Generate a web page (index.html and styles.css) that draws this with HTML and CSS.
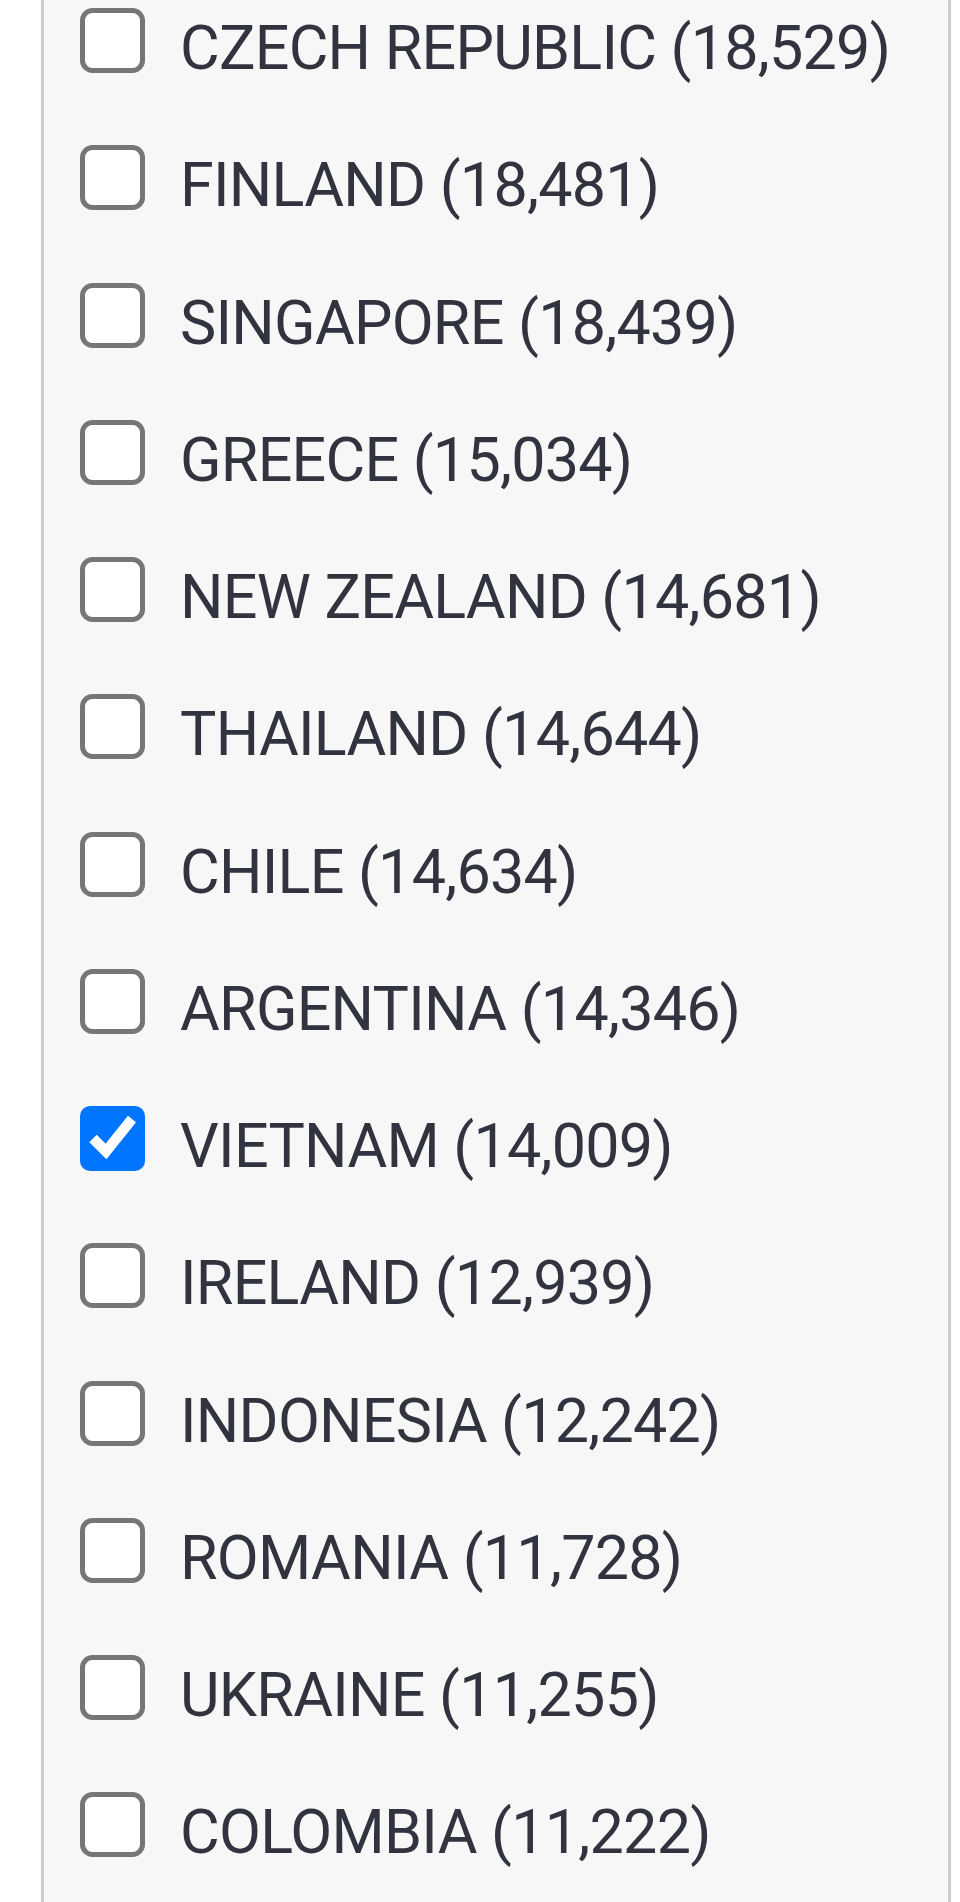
FILE: index.html
```html
<!DOCTYPE html>
<html lang="en">
<head>
    <meta charset="UTF-8">
    <meta name="viewport" content="width=device-width, initial-scale=1.0">
    <title>Country filter</title>
    <link rel="stylesheet" href="styles.css">
</head>
<body>

    <div class="filter-list">
        <label class="filter-item"><input type="checkbox" name="country" value="CZ"><span>CZECH REPUBLIC (18,529)</span></label>
        <label class="filter-item"><input type="checkbox" name="country" value="FI"><span>FINLAND (18,481)</span></label>
        <label class="filter-item"><input type="checkbox" name="country" value="SG"><span>SINGAPORE (18,439)</span></label>
        <label class="filter-item"><input type="checkbox" name="country" value="GR"><span>GREECE (15,034)</span></label>
        <label class="filter-item"><input type="checkbox" name="country" value="NZ"><span>NEW ZEALAND (14,681)</span></label>
        <label class="filter-item"><input type="checkbox" name="country" value="TH"><span>THAILAND (14,644)</span></label>
        <label class="filter-item"><input type="checkbox" name="country" value="CL"><span>CHILE (14,634)</span></label>
        <label class="filter-item"><input type="checkbox" name="country" value="AR"><span>ARGENTINA (14,346)</span></label>
        <label class="filter-item"><input type="checkbox" name="country" value="VN" checked><span>VIETNAM (14,009)</span></label>
        <label class="filter-item"><input type="checkbox" name="country" value="IE"><span>IRELAND (12,939)</span></label>
        <label class="filter-item"><input type="checkbox" name="country" value="ID"><span>INDONESIA (12,242)</span></label>
        <label class="filter-item"><input type="checkbox" name="country" value="RO"><span>ROMANIA (11,728)</span></label>
        <label class="filter-item"><input type="checkbox" name="country" value="UA"><span>UKRAINE (11,255)</span></label>
        <label class="filter-item"><input type="checkbox" name="country" value="CO"><span>COLOMBIA (11,222)</span></label>
    </div>

</body>
</html>
```
FILE: styles.css
```css
body {
    margin: 0;
    background-color: #ffffff;
    font-family: Roboto, "Liberation Sans", sans-serif;
    color: #31333f;
}
.filter-list {
    margin-left: 41px;
    width: 910px;
    min-height: 1902px;
    box-sizing: border-box;
    padding-top: 8px;
    background-color: #f7f7f7;
    border-left: 3px solid #cdcdcd;
    border-right: 3px solid #cdcdcd;
}
.filter-item {
    display: flex;
    align-items: flex-start;
    gap: 35px;
    height: 137.25px;
    padding-left: 36px;
    cursor: pointer;
}
.filter-item input {
    zoom: 5;
    margin: 0;
    flex-shrink: 0;
    cursor: pointer;
}
.filter-item span {
    font-size: 61px;
    line-height: 80px;
    letter-spacing: -0.75px;
    white-space: nowrap;
}
```
